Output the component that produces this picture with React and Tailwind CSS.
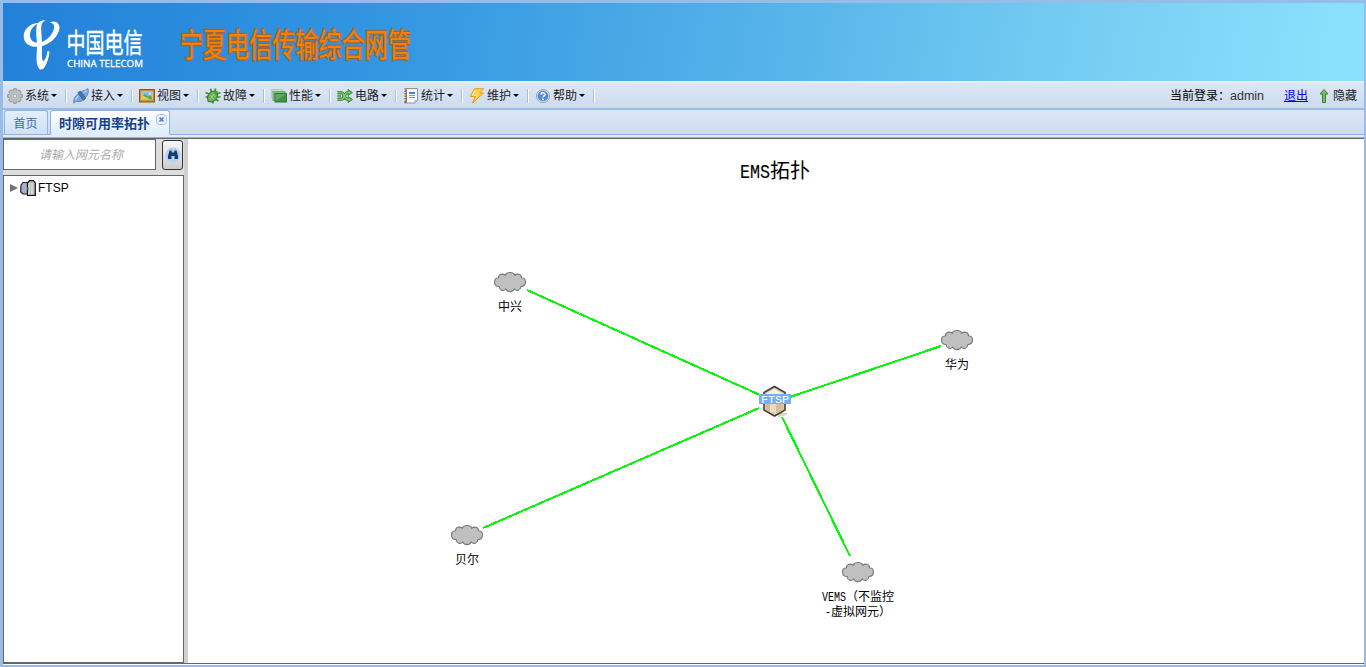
import React from 'react';

const cjk = "font-['Liberation_Sans','Noto_Sans_CJK_SC',sans-serif]";

const Gear = () => (
  <svg width="16" height="16" viewBox="0 0 16 16">
    <g fill="#b9b9b9" stroke="#858585" strokeWidth=".8">
      {[0, 45, 90, 135].map((a) => (
        <rect key={a} x="6.3" y=".6" width="3.4" height="14.8" rx=".8" transform={`rotate(${a} 8 8)`} />
      ))}
    </g>
    <circle cx="8" cy="8" r="5.5" fill="#c4c4c4" />
    <circle cx="8" cy="8" r="4" fill="#d0d0d0" stroke="#aaa" strokeWidth=".7" />
    <circle cx="8" cy="8" r="2" fill="#dfe8f5" stroke="#888" strokeWidth=".8" />
  </svg>
);
const Plug = () => (
  <svg width="16" height="16" viewBox="0 0 16 16">
    <path d="M.8 15.200C.3 11 2 7.500 5.500 6l5 5.500c-2 3-5 2-7.500 2z" fill="#76a2d8" stroke="#5580b5" strokeWidth=".8" />
    <path d="M8 4c2-2 4-1 7-3.400C16 4 15 7 12.500 9.500z" fill="#7fabdc" stroke="#5580b5" strokeWidth=".8" />
    <path d="M4.800 4.500 7.500 3.200l5.300 7-2.300 2.300z" fill="#4674b0" stroke="#315c92" strokeWidth=".7" />
    <path d="M2.500 12.500C3 10 4 9 5.500 8M10.500 4.500 14 2.500" stroke="#b9d4ef" strokeWidth="1.200" fill="none" />
  </svg>
);
const Picture = () => (
  <svg width="16" height="16" viewBox="0 0 16 16">
    <rect x=".5" y="1.500" width="15" height="12.500" fill="#c98a35" stroke="#8d5614" />
    <rect x="2.800" y="3.800" width="10.400" height="7.900" fill="#6cc5f0" stroke="#f7dc9c" strokeWidth=".8" />
    <path d="M3 8.500 6 6l3 2.500 2-1 2.300 2v2H3z" fill="#5cab43" />
    <path d="M3 7 11 11.500H3z" fill="#e8d04e" />
    <circle cx="10.800" cy="5.800" r="1" fill="#fff3a1" />
  </svg>
);
const Bug = () => (
  <svg width="16" height="16" viewBox="0 0 16 16">
    <path d="M.5 4.500 4 6M.5 9h3M3 14l1.500-3M5.500.8 6.500 4M10.500.5 10 4M15.500 4.500 12 6M15.500 9H12M13.500 13 10 11M8 15.500V12" stroke="#3f8b36" strokeWidth="1.700" fill="none" />
    <ellipse cx="7.500" cy="8.500" rx="4.400" ry="6" transform="rotate(38 7.500 8.500)" fill="#67ad54" stroke="#34792d" />
    <path d="M5 7l4 4.500M9.500 5.500 4.500 12.500M7 5.500l3.500 3.500" stroke="#a6d88f" strokeWidth=".9" />
    <circle cx="11" cy="4.500" r="2" fill="#4f9b43" />
  </svg>
);
const Layers = () => (
  <svg width="16" height="16" viewBox="0 0 16 16">
    <rect x=".5" y="1.500" width="11" height="8" fill="#c4dfc5" stroke="#b0d0b2" />
    <rect x="2" y="3.500" width="12" height="9" fill="#8abc8b" stroke="#72a875" />
    <rect x="4" y="5.500" width="11.500" height="8.500" fill="#438f44" stroke="#2d772f" />
    <path d="M4.500 13V6H15z" fill="#78b575" opacity=".6" />
  </svg>
);
const Shuffle = () => (
  <svg width="16" height="16" viewBox="0 0 16 16">
    <path d="M.5 4.500H4c3.500 0 3 7 7 7h1M.5 11.500H4c3.500 0 3-7 7-7h1M.5 8H4" fill="none" stroke="#3d8e38" strokeWidth="3.200" />
    <path d="M11 1.500 15.500 4.500 11 7.500zM11 8.500l4.500 3-4.500 3z" fill="#6ab35d" stroke="#3d8e38" />
    <path d="M1 4.500h3c3.500 0 3 7 7 7h2M1 11.500h3c3.500 0 3-7 7-7h2M1 8h3" fill="none" stroke="#8fce80" strokeWidth="1.200" />
  </svg>
);
const Notebook = () => (
  <svg width="16" height="16" viewBox="0 0 16 16">
    <path d="M3.500.5h11v12l-2.500 2.500h-8.500z" fill="#f8f9fc" stroke="#8a94a4" />
    <path d="M12 15v-2.500h2.500" fill="#d6dbe4" stroke="#8a94a4" strokeWidth=".7" />
    <rect x="1.500" y=".3" width="2" height="15" fill="#98593c" />
    <path d="M.8 2h2M.8 4.500h2M.8 7h2M.8 9.500h2M.8 12h2" stroke="#eee" />
    <rect x="6" y="4" width="6" height="2" fill="#4d7fc4" />
    <path d="M6 7.500h6M6 9.500h6" stroke="#789fd5" />
  </svg>
);
const Bolt = () => (
  <svg width="16" height="16" viewBox="0 0 16 16">
    <path d="M5.500.7h9L10.700 5h3.800L3.500 15l2.800-6.500H1.300z" fill="#fcd34a" stroke="#e59a1c" />
    <path d="M6.200 2 3.300 7.200h5" stroke="#fff0a4" fill="none" />
  </svg>
);
const Help = () => (
  <svg width="16" height="16" viewBox="0 0 16 16">
    <circle cx="8" cy="8" r="6.500" fill="#dfe9f6" stroke="#8ba7c9" />
    <circle cx="8" cy="8" r="5" fill="#5a8ccb" stroke="#4778b7" strokeWidth=".6" />
    <path d="M6 6.600C6 4 10 4.200 10 6.500 10 8 8 7.900 8 9.500M8 10.700v1.500" stroke="#fff" strokeWidth="1.500" fill="none" />
  </svg>
);

const menu = [
  ['系统', Gear], ['接入', Plug], ['视图', Picture], ['故障', Bug], ['性能', Layers],
  ['电路', Shuffle], ['统计', Notebook], ['维护', Bolt], ['帮助', Help],
];

const Logo = () => (
  <svg className="ml-[20px] shrink-0" width="126" height="78" viewBox="23 3 126 78">
    <g fill="#fff">
      <path d="M39.500 23C31 22.500 23.500 29 23.700 36.500 24 44.500 31.500 48 40 46.500 51 44.500 59 35.500 59.500 28 59.700 23 55 19.500 49.500 22.500 53.500 23 54.800 25 54 28.500 52.500 35 46 42 39 42.700 32.500 43.200 29.500 39 30 34 30.500 29 34 25 39.500 23z" />
      <path d="M46 20C40 20 37 23 36.500 27 35.500 34 37.500 42 37 48 36.500 56 36 62 38 67 39.500 70.500 43 70.500 45 66.500 47.500 62 49 57 49.500 51.500L47.500 51C47 55 45.500 60 43.500 61 41.500 61 41.800 54 42 47 42.300 38 40.500 29 41.500 25 42 22.500 44 21 46 20z" />
    </g>
    <text x="66.500" y="0" transform="translate(0 52.500) scale(1 1.450)" fill="#fff" fontSize="19" textLength="76" stroke="#fff" strokeWidth=".3" fontFamily="Noto Sans CJK SC, sans-serif">中国电信</text>
    <text x="67" y="67" fill="#fff" fontSize="9.800" textLength="76" lengthAdjust="spacingAndGlyphs" stroke="#fff" strokeWidth=".3" fontFamily="Open Sans, sans-serif">CHINA TELECOM</text>
  </svg>
);

const Title = () => (
  <svg className="ml-[30px] shrink-0" width="236" height="78" viewBox="179 3 236 78">
    <text x="180" y="40" transform="translate(0 57) scale(1 1.420) translate(0 -40)" fontSize="23.100" fontWeight="400" fill="#f48200" stroke="#98653f" strokeWidth="1.600" paintOrder="stroke" textLength="231" fontFamily="Noto Sans CJK SC, sans-serif">宁夏电信传输综合网管</text>
  </svg>
);

const nodes = [
  { x: 510, y: 282, label: ['中兴'] },
  { x: 957, y: 340, label: ['华为'] },
  { x: 467, y: 535, label: ['贝尔'] },
  { x: 858, y: 572, label: [] },
];

const Topology = () => (
  <svg className="block" width="1176" height="524" viewBox="188 139 1176 524" fontFamily="Liberation Mono, Noto Sans CJK SC, monospace">
    <g stroke="#00f800" strokeWidth="2" shapeRendering="crispEdges">
      <path d="M527 290 760 395M941 346 790 397M483 528 759 408M850 556 782 417" />
    </g>
    <text x="740" y="178" fontSize="21" textLength="30" lengthAdjust="spacingAndGlyphs" stroke="#000" strokeWidth=".15">EMS</text>
    <text x="770" y="178" fontSize="20" fontFamily="Noto Sans CJK SC, sans-serif">拓扑</text>
    {nodes.map((n) => (
      <g key={n.x}>
        <path
          transform={`translate(${n.x} ${n.y})`}
          d="M-11 4.500C-14 4.500-15.500 2.500-15.500 0S-14-4-11.500-4.200C-11.500-7.800-7-9-4.800-6.700-3.500-10.500 3.500-10.500 4.800-6.700 7-9 11.500-7.800 11.500-4.200 14-4 15.500-2.500 15.500 0S14 4.500 11 4.500C10.500 8.500 6.500 9.500 4.300 7 2.500 10.500-2.500 10.500-4.300 7-6.500 9.500-10.500 8.500-11 4.500Z"
          fill="#c0c0c0" stroke="#777" strokeWidth="1.100"
        />
        {n.label.map((t) => (
          <text key={t} x={n.x - 12} y={n.y + 29} fontSize="12">{t}</text>
        ))}
      </g>
    ))}
    <g fontSize="12">
      <text x="822" y="601" textLength="24" lengthAdjust="spacingAndGlyphs">VEMS</text>
      <text x="846" y="601">（不监控</text>
      <text x="825" y="616" textLength="6" lengthAdjust="spacingAndGlyphs">-</text>
      <text x="831" y="616">虚拟网元）</text>
    </g>
    <path d="M778 413h9v2l-9 2z" fill="#dcd2bd" />
    <path d="M774.500 386.500 785 392.500v17.500l-10.500 6-10.500-6v-17.500z" fill="#ded0b2" stroke="#493e36" strokeWidth="1.600" />
    <path d="M766 394l8-5 9 5-8 4z" fill="#f6f0e3" />
    <path d="M766 402v7l4 3v-10z" fill="#cdbd9b" />
    <path d="M776 402v12l7-4v-8z" fill="#d2c19c" />
    <path d="M770 402h6v10l-6 1z" fill="#eadcc0" />
    <rect x="759" y="394" width="32" height="10" fill="#74b0f0" />
    <text x="761" y="402.500" fontSize="11" fill="#fff" textLength="28" lengthAdjust="spacingAndGlyphs">FTSP</text>
  </svg>
);

export default function App() {
  return (
    <div className={`h-[667px] w-[1366px] overflow-hidden border-[#99bbe8] border-t-[3px] border-l-[3px] border-r-2 border-b-2 bg-white text-[12px] leading-4 text-[#222] ${cjk}`}>
      <header className="flex h-[78px] bg-[linear-gradient(100deg,#2381d9_0%,#3296e1_28%,#58b5ea_58%,#76cff3_80%,#8ae3fd_100%)]">
        <Logo />
        <Title />
      </header>

      <nav className="flex h-[29px] items-center border-t-2 border-b-2 border-t-[#e4eefa] border-b-[#99bbe8] bg-gradient-to-b from-[#dce7f5] to-[#cddbef]">
        {menu.map(([label, Icon]) => (
          <div key={label} className="flex h-full w-[66px] shrink-0 items-center pl-1">
            <Icon />
            <span className="ml-[2px] w-[24px] whitespace-nowrap">{label}</span>
            <svg className="ml-[2px]" width="6" height="3"><path d="M0 0h6L3 3z" fill="#000" /></svg>
            <span className="ml-[8px] h-[14px] w-[2px] border-r border-l border-r-white border-l-[#9fc3ee]" />
          </div>
        ))}
        <div className="ml-auto flex items-center pr-[7px] whitespace-nowrap">
          <span className="w-[60px] text-black">当前登录：</span>
          <span className="w-[54px] text-[12.500px] text-[#333]">admin</span>
          <a className="w-[24px] text-[#0000ee] underline">退出</a>
          <svg className="mr-[4px] ml-[11px]" width="10" height="14" viewBox="0 0 10 14"><path d="M5 .5 9 5H6.500v8.500H3.500V5H1z" fill="#78bd69" stroke="#34832c" /></svg>
          <span>隐藏</span>
        </div>
      </nav>

      <div className="flex h-[28px] flex-col bg-gradient-to-b from-[#dde7f5] to-[#cbdaf0]">
        <div className="flex h-[24px] items-end">
          <div className="ml-px flex h-[24px] w-[44px] items-center justify-center rounded-t-[3px] border border-b-0 border-[#8db2e3] bg-gradient-to-b from-[#e4eefb] to-[#cfe0f5] pr-px pt-[2px] text-[#416aa3]">首页</div>
          <div className="relative z-10 -mb-px ml-[2px] flex h-[25px] w-[120px] items-center rounded-t-[3px] border border-b-0 border-[#8db2e3] bg-gradient-to-b from-white to-[#deecfd] pl-[8px] font-bold text-[#15428b]">
            <span className="w-[92px] pt-px text-[13px] whitespace-nowrap">时隙可用率拓扑</span>
            <svg className="mb-[7px] ml-[5px]" width="11" height="11"><rect x=".5" y=".5" width="10" height="10" rx="3" fill="#e7f1fd" stroke="#a3c5ed" /><path d="m3.500 3.500 4 4m0-4-4 4" stroke="#5b7da9" strokeWidth="1.700" /></svg>
          </div>
        </div>
        <div className="h-[4px] border-t border-b border-[#8db2e3] bg-[#deecfd]" />
      </div>

      <main className="flex h-[526px] border-t border-b border-[#666]">
        <aside className="flex h-full w-[181px] shrink-0 flex-col bg-[#dedede]">
          <div className="flex h-[36px]">
            <div className="flex h-[31px] w-[153px] items-center justify-center border border-[#666] bg-white pt-px pl-[3px] text-[12px] text-[#aaa] italic">请输入网元名称</div>
            <div className="ml-[6px] mt-px flex h-[30px] w-[21px] items-center justify-center rounded-[3px] border border-[#333] bg-gradient-to-b from-[#f7f7f7] to-[#ccc]">
              <svg width="16" height="16" viewBox="0 0 16 16">
                <circle cx="8" cy="8" r="7.500" fill="#b6d1f3" />
                <path d="M4.500 3.500h2l.5 2h2l.5-2h2L13 9v3H9.500V9h-3v3H3V9z" fill="#183c70" />
              </svg>
            </div>
          </div>
          <div className="flex-1 border border-[#666] bg-white">
            <div className="mt-[4px] flex h-[16px] items-center pl-[6px] text-black">
              <svg width="8" height="8"><path d="M0 0 8 4 0 8z" fill="#6b746f" /></svg>
              <svg className="ml-[2px] shrink-0" width="16" height="16" viewBox="0 0 16 16">
                <path d="M1 5 3 2.500h6v11L7 14H3L.7 12z" fill="#a9afd2" stroke="#222" strokeWidth="1.200" />
                <path d="M7.500 3 9.500.7h4L15.300 3v12.300H7.500z" fill="#bdbdc4" stroke="#111" strokeWidth="1.200" />
                <path d="M9 3v12M12 3v12" stroke="#eee" /><path d="M8 7.500v2" stroke="#00cf00" strokeWidth="1.500" />
              </svg>
              <span className="ml-[2px] text-[12px]">FTSP</span>
            </div>
          </div>
        </aside>
        <div className="h-full w-[4px] shrink-0 bg-[#d0d0d0]" />
        <section className="min-w-0 flex-1 overflow-hidden bg-white"><Topology /></section>
      </main>
    </div>
  );
}
